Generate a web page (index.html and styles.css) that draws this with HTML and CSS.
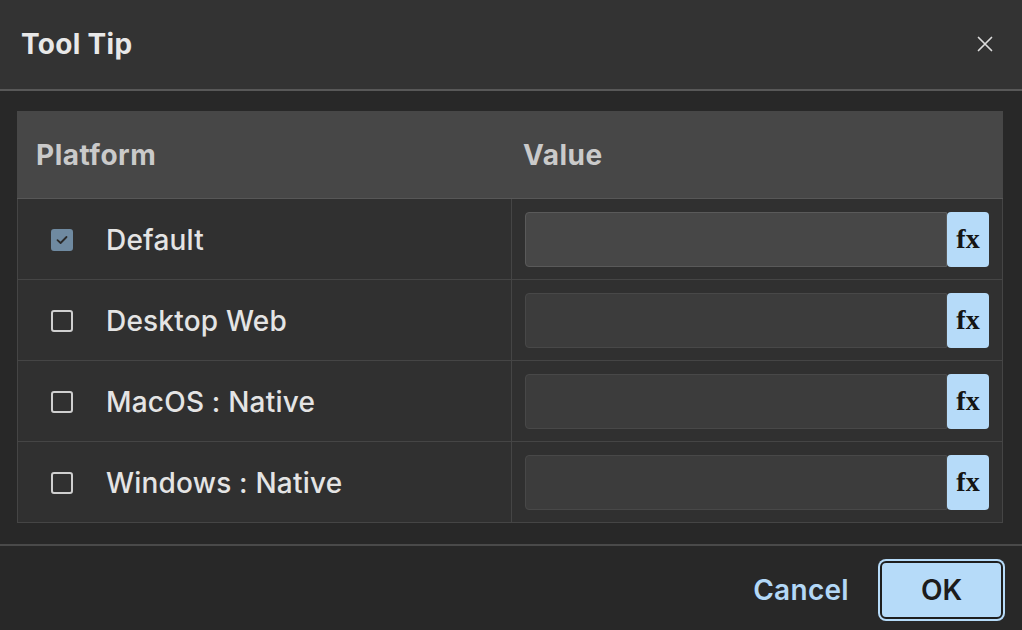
FILE: index.html
```html
<!doctype html>
<html lang="en">
<head>
    <meta charset="UTF-8">
    <title>Tool Tip</title>
    <link rel="stylesheet" href="styles.css">
</head>
<body>
<div class="dialog">
    <div class="dialogHead">
        <h1>Tool Tip</h1>
        <button class="close" aria-label="Close">
            <svg width="16" height="16" viewBox="0 0 16 16">
                <path d="M1.5 1.5 L14.5 14.5 M14.5 1.5 L1.5 14.5" stroke="#dcdcdc" stroke-width="1.7" stroke-linecap="round"/>
            </svg>
        </button>
    </div>
    <div class="dialogBody">
        <div class="grid">
            <div class="row head">
                <div class="cell">Platform</div>
                <div class="cell">Value</div>
            </div>
            <div class="row">
                <div class="cell name"><span class="check on">
                    <svg width="12" height="10" viewBox="0 0 12 10"><path d="M1.5 5.2 L4.6 8 L10.5 2" fill="none" stroke="#2a2a2a" stroke-width="1.8" stroke-linecap="round" stroke-linejoin="round"/></svg>
                </span>Default</div>
                <div class="cell val"><span class="input active"></span><span class="fx">fx</span></div>
            </div>
            <div class="row">
                <div class="cell name"><span class="check"></span>Desktop Web</div>
                <div class="cell val"><span class="input"></span><span class="fx">fx</span></div>
            </div>
            <div class="row">
                <div class="cell name"><span class="check"></span>MacOS : Native</div>
                <div class="cell val"><span class="input"></span><span class="fx">fx</span></div>
            </div>
            <div class="row">
                <div class="cell name"><span class="check"></span>Windows : Native</div>
                <div class="cell val"><span class="input"></span><span class="fx">fx</span></div>
            </div>
        </div>
    </div>
    <div class="dialogFoot">
        <button class="cancel">Cancel</button>
        <button class="ok">OK</button>
    </div>
</div>
</body>
</html>
```

FILE: styles.css
```css
* {
    margin: 0;
    padding: 0;
    box-sizing: border-box;
}

html, body {
    width: 1022px;
    height: 630px;
    overflow: hidden;
}

body {
    background: #282828;
    font-family: "Inter", "Liberation Sans", sans-serif;
}

.dialog {
    width: 1022px;
    height: 630px;
    display: flex;
    flex-direction: column;
    background: #282828;
}

.dialogHead {
    height: 91px;
    background: #333333;
    border-bottom: 2px solid #585858;
    display: flex;
    align-items: center;
    justify-content: space-between;
    padding: 0 29px 2px 21px;
}

.dialogHead h1 {
    font-size: 28px;
    font-weight: 700;
    color: #e8e8e8;
    letter-spacing: 0.3px;
}

.close {
    background: none;
    border: 0;
    width: 16px;
    height: 16px;
    display: flex;
}

.dialogBody {
    padding: 20px 19px 21px 17px;
    border-bottom: 2px solid #4a4a4a;
}

.grid {
    border: 1px solid #454545;
    border-top: 0;
    background: #303030;
}

.row {
    display: grid;
    grid-template-columns: 493px 1fr;
    height: 81px;
    border-bottom: 1px solid #454545;
}

.row:last-child {
    border-bottom: 0;
    height: 80px;
}

.row.head {
    height: 88px;
    background: #474747;
    border-bottom: 1px solid #575757;
    margin: 0 -1px;
}

.cell {
    display: flex;
    align-items: center;
}

.row .cell + .cell {
    border-left: 1px solid #454545;
}

.row.head .cell {
    font-size: 28px;
    font-weight: 700;
    color: #cacaca;
    padding-left: 19px;
    letter-spacing: 0.5px;
}

.row.head .cell + .cell {
    border-left: 0;
    padding-left: 13px;
}

.name {
    padding-left: 33px;
    font-size: 28px;
    font-weight: 500;
    color: #e4e4e4;
    letter-spacing: 0.2px;
    padding-top: 2px;
}

.check {
    width: 22px;
    height: 22px;
    border: 2px solid #cfcfcf;
    border-radius: 3px;
    margin-right: 33px;
    display: flex;
    align-items: center;
    justify-content: center;
}

.check.on {
    background: #6f8aa1;
    border-color: #6f8aa1;
}

.val {
    padding: 0 13px;
}

.input {
    flex: 1;
    height: 55px;
    background: #3c3c3c;
    border: 1px solid #484848;
    border-radius: 4px 0 0 4px;
}

.input.active {
    background: #474747;
    border-color: #5a5a5a;
}

.fx {
    width: 42px;
    height: 55px;
    background: #b6dbf9;
    border-radius: 4px;
    display: flex;
    align-items: center;
    justify-content: center;
    font-family: "Liberation Serif", serif;
    font-weight: 700;
    font-size: 28px;
    color: #151515;
}

.dialogFoot {
    flex: 1;
    display: flex;
    align-items: center;
    justify-content: flex-end;
    padding: 3px 19px 0 0;
    gap: 31px;
}

.cancel {
    background: none;
    border: 0;
    font-family: inherit;
    font-size: 28px;
    font-weight: 600;
    color: #b3d8f7;
    letter-spacing: 0.3px;
}

.ok {
    width: 123px;
    height: 58px;
    background: #b6dbf9;
    border: 2px solid #1e1e1e;
    border-radius: 6px;
    box-shadow: 0 0 0 2px #b6dbf9;
    font-family: inherit;
    font-size: 28px;
    font-weight: 600;
    color: #1c1c1c;
}
```
